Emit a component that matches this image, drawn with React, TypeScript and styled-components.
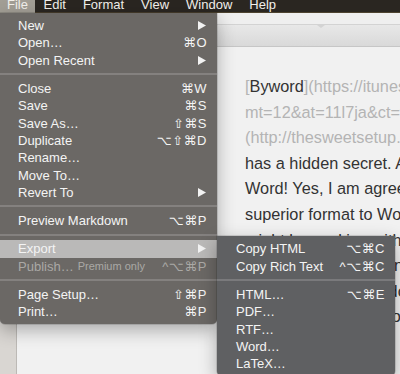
import React from 'react';
import styled, { createGlobalStyle } from 'styled-components';

const GlobalStyle = createGlobalStyle`
  html, body {
    margin: 0;
    padding: 0;
  }

  body {
    width: 400px;
    height: 374px;
    overflow: hidden;
    background: #d9d6d2;
    font-family: "Liberation Sans", Arial, "DejaVu Sans", sans-serif;
  }
`;

const SCScreen = styled.div`
  position: relative;
  width: 400px;
  height: 374px;
  overflow: hidden;
  display: flex;
  flex-direction: column;
  background: #d9d6d2;
`;

const SCMenuBar = styled.div`
  flex: none;
  height: 13px;
  display: flex;
  overflow: hidden;
  background: #2a2621;
  box-shadow: inset 0 -1px 0 #4e4430;
`;

const SCMenuBarItem = styled.div<{ $active?: boolean }>`
  height: 13px;
  line-height: 10px;
  padding: 0 8.5px;
  font-size: 13px;
  color: #f2f0ec;
  white-space: nowrap;

  &:first-child {
    width: 21px;
    padding: 0 7px;
  }

  ${(props) => props.$active && `background: #a29e95;`}
`;

const SCDesktop = styled.div`
  flex: 1;
  min-height: 0;
  display: flex;
  padding-left: 16px;
`;

const SCWindow = styled.div`
  flex: 1;
  display: flex;
  flex-direction: column;
  border-left: 1px solid #bcb9b5;
  background: #f1f1f1;
`;

const SCTitleStrip = styled.div`
  position: relative;
  flex: none;
  height: 11px;
  background: #efefef;
  border-bottom: 1px solid #d3d3d3;

  /* little notch in the divider line */
  &::after {
    content: '';
    position: absolute;
    left: 300px;
    bottom: -4px;
    width: 0;
    height: 0;
    border-left: 4px solid transparent;
    border-right: 4px solid transparent;
    border-top: 3px solid #d3d3d3;
  }
`;

const SCToolbar = styled.div`
  flex: none;
  height: 21px;
  background: linear-gradient(#e8e8e8, #d9d9d9);
  border-bottom: 1px solid #c6c6c6;
`;

const SCEditor = styled.div`
  flex: 1;
  overflow: hidden;
  padding: 27px 0 0 228px;
  font-size: 16.3px;
  line-height: 25.6px;
  color: #333333;
`;

const SCLine = styled.div<{ $muted?: boolean }>`
  white-space: nowrap;
  color: ${(props) => (props.$muted ? '#b4b4b4' : '#333333')};
`;

const SCStrong = styled.span`
  color: #333333;
`;

const SCMenu = styled.div<{ $top: number; $left: number; $width: number; $bg: string }>`
  position: absolute;
  top: ${(props) => props.$top}px;
  left: ${(props) => props.$left}px;
  width: ${(props) => props.$width}px;
  padding: 4px 0;
  background: ${(props) => props.$bg};
  border-radius: 0 0 5px 5px;
  box-shadow: 0 6px 18px rgba(0, 0, 0, 0.3), 0 0 0 0.5px rgba(0, 0, 0, 0.25);
`;

const SCItem = styled.div<{ $disabled?: boolean; $selected?: boolean; $padLeft: number }>`
  display: flex;
  align-items: center;
  height: 17.3px;
  padding: 0 10px 0 ${(props) => props.$padLeft}px;
  font-size: 13px;
  white-space: nowrap;
  color: ${(props) => (props.$disabled ? '#aaa8a5' : '#f4f4f4')};
  background: ${(props) => (props.$selected ? '#bab9b8' : 'transparent')};
`;

const SCNote = styled.span`
  margin-left: 4px;
  font-size: 11px;
`;

const SCShortcut = styled.span`
  margin-left: auto;
  letter-spacing: 0.5px;
`;

const SCArrow = styled.svg`
  margin-left: auto;
  margin-right: 1px;
  width: 8px;
  height: 9px;
`;

const SCSeparator = styled.div`
  height: 2px;
  margin: 4.5px 0;
  background: rgba(255, 255, 255, 0.17);
`;

type Entry =
  | { sep: true }
  | {
      sep?: false;
      label: string;
      note?: string;
      shortcut?: string;
      submenu?: boolean;
      disabled?: boolean;
      selected?: boolean;
    };

const fileMenu: Entry[] = [
  { label: 'New', submenu: true },
  { label: 'Open…', shortcut: '⌘O' },
  { label: 'Open Recent', submenu: true },
  { sep: true },
  { label: 'Close', shortcut: '⌘W' },
  { label: 'Save', shortcut: '⌘S' },
  { label: 'Save As…', shortcut: '⇧⌘S' },
  { label: 'Duplicate', shortcut: '⌥⇧⌘D' },
  { label: 'Rename…' },
  { label: 'Move To…' },
  { label: 'Revert To', submenu: true },
  { sep: true },
  { label: 'Preview Markdown', shortcut: '⌥⌘P' },
  { sep: true },
  { label: 'Export', submenu: true, selected: true },
  { label: 'Publish…', note: 'Premium only', shortcut: '^⌥⌘P', disabled: true },
  { sep: true },
  { label: 'Page Setup…', shortcut: '⇧⌘P' },
  { label: 'Print…', shortcut: '⌘P' },
];

const exportMenu: Entry[] = [
  { label: 'Copy HTML', shortcut: '⌥⌘C' },
  { label: 'Copy Rich Text', shortcut: '^⌥⌘C' },
  { sep: true },
  { label: 'HTML…', shortcut: '⌥⌘E' },
  { label: 'PDF…' },
  { label: 'RTF…' },
  { label: 'Word…' },
  { label: 'LaTeX…' },
];

const MenuItems = ({ entries, padLeft }: { entries: Entry[]; padLeft: number }) => (
  <>
    {entries.map((entry, i) =>
      entry.sep ? (
        <SCSeparator key={i} />
      ) : (
        <SCItem
          key={i}
          $padLeft={padLeft}
          $disabled={entry.disabled}
          $selected={entry.selected}
        >
          {entry.label}
          {entry.note && <SCNote>{entry.note}</SCNote>}
          {entry.shortcut && <SCShortcut>{entry.shortcut}</SCShortcut>}
          {entry.submenu && (
            <SCArrow viewBox="0 0 8 9">
              <path d="M0 0 L8 4.5 L0 9 Z" fill="#f2f2f2" />
            </SCArrow>
          )}
        </SCItem>
      )
    )}
  </>
);

const App: React.FC = () => {
  return (
    <SCScreen>
      <GlobalStyle />
      <SCMenuBar>
        <SCMenuBarItem $active>File</SCMenuBarItem>
        <SCMenuBarItem>Edit</SCMenuBarItem>
        <SCMenuBarItem>Format</SCMenuBarItem>
        <SCMenuBarItem>View</SCMenuBarItem>
        <SCMenuBarItem>Window</SCMenuBarItem>
        <SCMenuBarItem>Help</SCMenuBarItem>
      </SCMenuBar>

      <SCDesktop>
        <SCWindow>
          <SCTitleStrip />
          <SCToolbar />
          <SCEditor>
            <SCLine $muted>
              [<SCStrong>Byword</SCStrong>](https://itunes.apple.com/us/app/byword/id420212497?
            </SCLine>
            <SCLine $muted>mt=12&amp;at=11l7ja&amp;ct=tss) for Mac</SCLine>
            <SCLine $muted>(http://thesweetsetup.com/apps/best-markdown)</SCLine>
            <SCLine>has a hidden secret. As a Markdown editor it</SCLine>
            <SCLine>Word! Yes, I am agreeing that Markdown is a</SCLine>
            <SCLine>superior format to Word, but sometimes you</SCLine>
            <SCLine>might be working with someone who needs a</SCLine>
            <SCLine>Word file. Byword can export your Markdown</SCLine>
            <SCLine>directly into a Word document for you to</SCLine>
            <SCLine>send along to your colleague, and it looks</SCLine>
            <SCLine>good too.</SCLine>
          </SCEditor>
        </SCWindow>
      </SCDesktop>

      <SCMenu $top={13} $left={0} $width={217} $bg="#6b6865">
        <MenuItems entries={fileMenu} padLeft={18} />
      </SCMenu>

      <SCMenu $top={236.3} $left={217} $width={178} $bg="#5f6062">
        <MenuItems entries={exportMenu} padLeft={19} />
      </SCMenu>
    </SCScreen>
  );
};

export default App;
